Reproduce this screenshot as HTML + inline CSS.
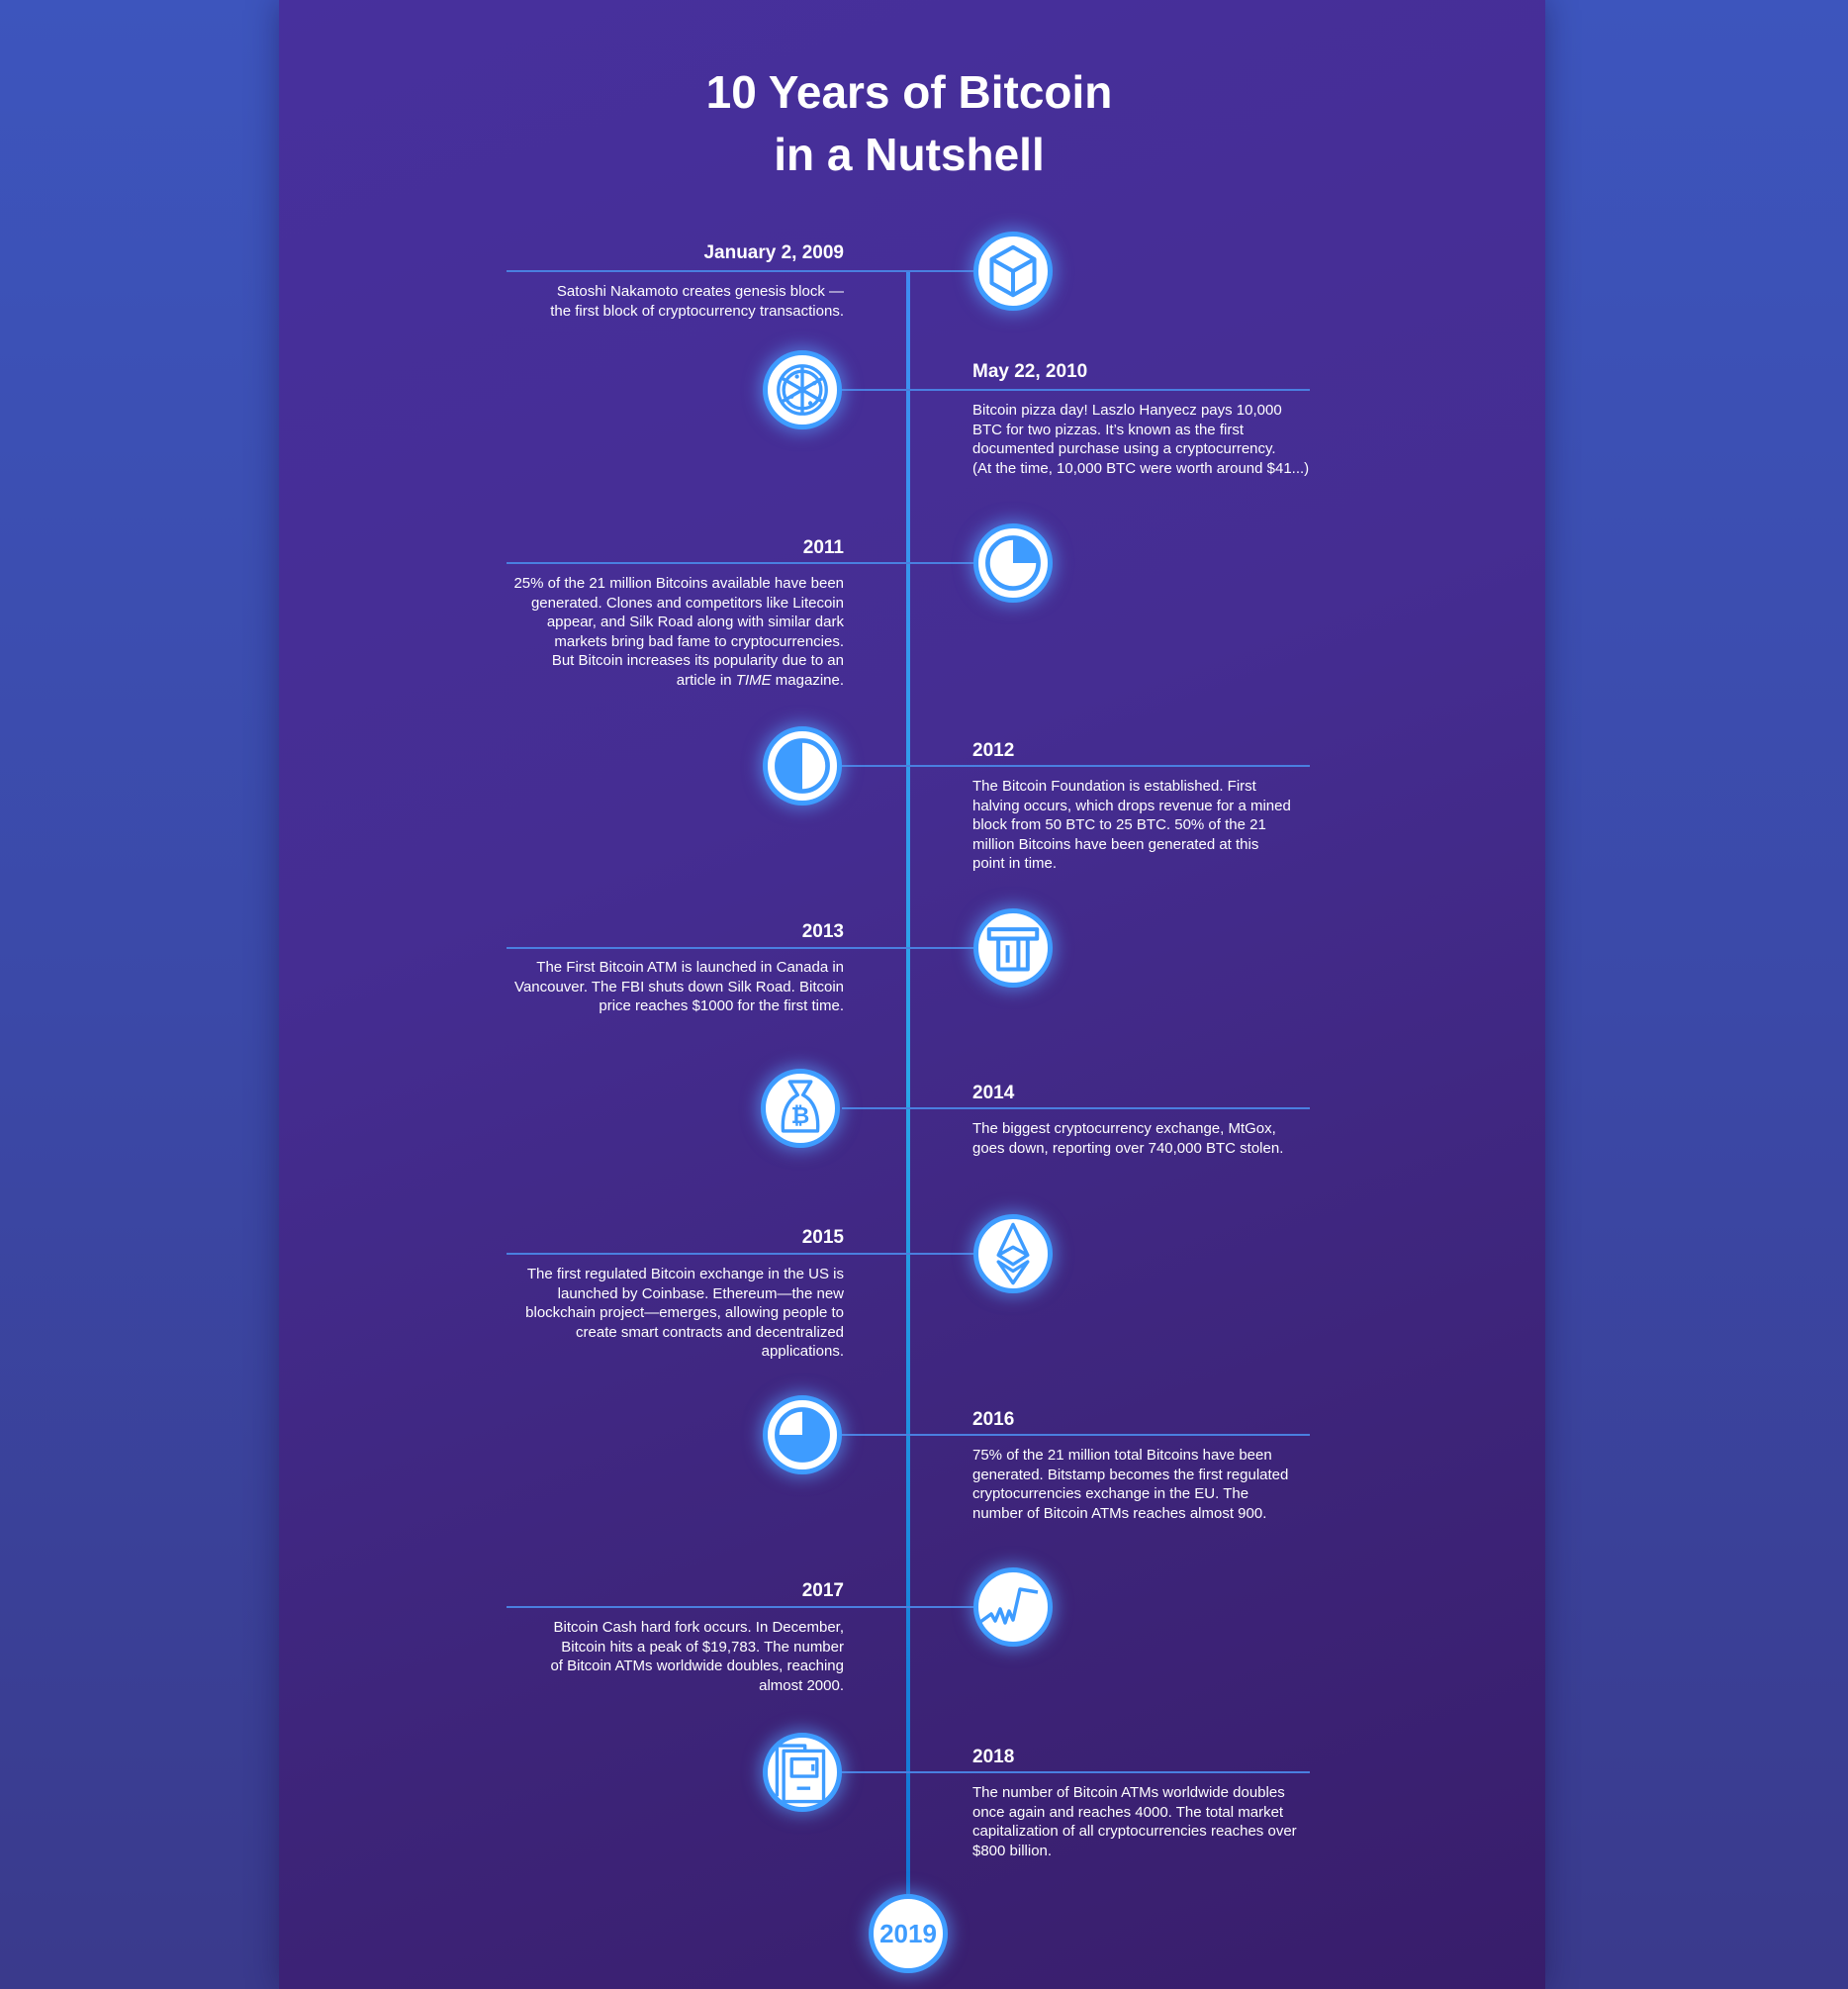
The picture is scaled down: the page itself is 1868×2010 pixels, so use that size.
<!DOCTYPE html>
<html><head><meta charset="utf-8"><style>
*{margin:0;padding:0;box-sizing:border-box}
body{width:1868px;height:2010px;position:relative;overflow:hidden;font-family:"Liberation Sans",sans-serif;background:linear-gradient(180deg,#3d55bd 0%,#3b49a8 50%,#3a3a8c 100%)}
#panel{position:absolute;left:282px;top:0;width:1280px;height:2010px;background:linear-gradient(160deg,#47309d 0%,#452d92 40%,#3d2479 75%,#381d6b 100%);box-shadow:0 0 30px rgba(20,10,60,.4)}
h1{position:absolute;left:0;width:1838px;top:62px;text-align:center;color:#fff;font-size:46px;line-height:63px;font-weight:bold}
.v{position:absolute;left:916px;top:274px;width:4px;height:1640px;background:linear-gradient(180deg,#3f8cf2,#2aa6e8 50%,#1274d6)}
.h{position:absolute;height:2px;background:#4a7fe0}
.c{position:absolute;width:80px;height:80px;border-radius:50%;background:#fff;border:5px solid #3e9cff;box-shadow:0 0 16px 4px rgba(90,160,255,.55)}
.c svg{position:absolute;left:0;top:0;width:70px;height:70px}
.t{position:absolute;color:#fff;font-size:19px;font-weight:bold;line-height:22px;width:341px}
.b{position:absolute;color:#fff;font-size:15px;line-height:19.6px;width:345px}
.L{text-align:right}
</style></head><body>
<div id="panel"></div>
<h1>10 Years of Bitcoin<br>in a Nutshell</h1>
<div class="v"></div>

<div class="h" style="left:512px;top:273px;width:472px"></div>
<div class="t L" style="left:512px;top:245px">January 2, 2009</div>
<div class="b L" style="left:508px;top:285px">Satoshi Nakamoto creates genesis block —<br>the first block of cryptocurrency transactions.</div>
<div class="c" style="left:984px;top:234px"><svg viewBox="9 9 52 52" fill="none" stroke="#3e9cff" stroke-width="3" stroke-linejoin="round"><path d="M35 17 51 26 51 44 35 53 19 44 19 26Z M19 26 35 35 51 26 M35 35 35 53"/></svg></div>

<div class="h" style="left:851px;top:393px;width:473px"></div>
<div class="t" style="left:983px;top:365px">May 22, 2010</div>
<div class="b" style="left:983px;top:405px">Bitcoin pizza day! Laszlo Hanyecz pays 10,000<br>BTC for two pizzas. It’s known as the first<br>documented purchase using a cryptocurrency.<br>(At the time, 10,000 BTC were worth around $41...)</div>
<div class="c" style="left:771px;top:354px"><svg viewBox="9 9 52 52" fill="none" stroke="#3e9cff" stroke-width="2.5"><circle cx="35" cy="35" r="18"/><circle cx="35" cy="35" r="14"/><path d="M35 17V53M19.4 26 50.6 44M19.4 44 50.6 26"/><g fill="#3e9cff" stroke="none"><circle cx="31" cy="25" r="1.6"/><circle cx="44" cy="30" r="1.6"/><circle cx="41" cy="45" r="1.6"/><circle cx="27" cy="40" r="1.6"/></g></svg></div>

<div class="h" style="left:512px;top:568px;width:472px"></div>
<div class="t L" style="left:512px;top:543px">2011</div>
<div class="b L" style="left:508px;top:580px">25% of the 21 million Bitcoins available have been<br>generated. Clones and competitors like Litecoin<br>appear, and Silk Road along with similar dark<br>markets bring bad fame to cryptocurrencies.<br>But Bitcoin increases its popularity due to an<br>article in <i>TIME</i> magazine.</div>
<div class="c" style="left:984px;top:529px"><svg viewBox="9 9 52 52" fill="none" stroke="#3e9cff" stroke-width="3.5"><circle cx="35" cy="35" r="19"/><path d="M35 35V16A19 19 0 0 1 54 35Z" fill="#3e9cff" stroke="none"/></svg></div>

<div class="h" style="left:851px;top:773px;width:473px"></div>
<div class="t" style="left:983px;top:748px">2012</div>
<div class="b" style="left:983px;top:785px">The Bitcoin Foundation is established. First<br>halving occurs, which drops revenue for a mined<br>block from 50 BTC to 25 BTC. 50% of the 21<br>million Bitcoins have been generated at this<br>point in time.</div>
<div class="c" style="left:771px;top:734px"><svg viewBox="9 9 52 52" fill="none" stroke="#3e9cff" stroke-width="3.5"><circle cx="35" cy="35" r="19"/><path d="M35 16A19 19 0 0 0 35 54Z" fill="#3e9cff" stroke="none"/></svg></div>

<div class="h" style="left:512px;top:957px;width:472px"></div>
<div class="t L" style="left:512px;top:931px">2013</div>
<div class="b L" style="left:508px;top:968px">The First Bitcoin ATM is launched in Canada in<br>Vancouver. The FBI shuts down Silk Road. Bitcoin<br>price reaches $1000 for the first time.</div>
<div class="c" style="left:984px;top:918px"><svg viewBox="9 9 52 52" fill="none" stroke="#3e9cff" stroke-width="3" stroke-linejoin="round"><path d="M17 21H53V28H17Z M24 28V51H46V28 M31 33V46 M39 28V51"/></svg></div>

<div class="h" style="left:851px;top:1119px;width:473px"></div>
<div class="t" style="left:983px;top:1094px">2014</div>
<div class="b" style="left:983px;top:1131px">The biggest cryptocurrency exchange, MtGox,<br>goes down, reporting over 740,000 BTC stolen.</div>
<div class="c" style="left:769px;top:1080px"><svg viewBox="9 9 52 52" fill="none" stroke="#3e9cff" stroke-width="2.5" stroke-linejoin="round"><path d="M27 15H43L37 25C45 29 49 39 48 52H22C21 39 25 29 33 25Z"/><text x="35" y="46" font-family="Liberation Sans" font-weight="bold" font-size="17" fill="#3e9cff" stroke="none" text-anchor="middle">₿</text></svg></div>

<div class="h" style="left:512px;top:1266px;width:472px"></div>
<div class="t L" style="left:512px;top:1240px">2015</div>
<div class="b L" style="left:508px;top:1278px">The first regulated Bitcoin exchange in the US is<br>launched by Coinbase. Ethereum—the new<br>blockchain project—emerges, allowing people to<br>create smart contracts and decentralized<br>applications.</div>
<div class="c" style="left:984px;top:1227px"><svg viewBox="9 9 52 52" fill="none" stroke="#3e9cff" stroke-width="2.5" stroke-linejoin="round"><path d="M35 13 24 36 35 43 46 36Z M24 41 35 48 46 41 35 57Z M24 36 35 30 46 36"/></svg></div>

<div class="h" style="left:851px;top:1449px;width:473px"></div>
<div class="t" style="left:983px;top:1424px">2016</div>
<div class="b" style="left:983px;top:1461px">75% of the 21 million total Bitcoins have been<br>generated. Bitstamp becomes the first regulated<br>cryptocurrencies exchange in the EU. The<br>number of Bitcoin ATMs reaches almost 900.</div>
<div class="c" style="left:771px;top:1410px"><svg viewBox="9 9 52 52" fill="none" stroke="#3e9cff" stroke-width="3.5"><circle cx="35" cy="35" r="19"/><path d="M35 35V16A19 19 0 1 1 16 35Z" fill="#3e9cff" stroke="none"/></svg></div>

<div class="h" style="left:512px;top:1623px;width:472px"></div>
<div class="t L" style="left:512px;top:1597px">2017</div>
<div class="b L" style="left:508px;top:1635px">Bitcoin Cash hard fork occurs. In December,<br>Bitcoin hits a peak of $19,783. The number<br>of Bitcoin ATMs worldwide doubles, reaching<br>almost 2000.</div>
<div class="c" style="left:984px;top:1584px"><svg viewBox="0 0 70 70" fill="none" stroke="#3e9cff" stroke-width="3.5" stroke-linejoin="round"><path d="M2 50 13 42 17 49 22 37 27 51 31 39 35 48 42 17 60 20"/></svg></div>

<div class="h" style="left:851px;top:1790px;width:473px"></div>
<div class="t" style="left:983px;top:1765px">2018</div>
<div class="b" style="left:983px;top:1802px">The number of Bitcoin ATMs worldwide doubles<br>once again and reaches 4000. The total market<br>capitalization of all cryptocurrencies reaches over<br>$800 billion.</div>
<div class="c" style="left:771px;top:1751px"><svg viewBox="9 9 52 52" fill="none" stroke="#3e9cff" stroke-width="2.5" stroke-linejoin="round"><path d="M16 53V15H37V19 M21 19H51V57H21Z M27 25H46V38H27Z M31 47H41 M43 29V34"/></svg></div>

<div class="c" style="left:878px;top:1914px;display:flex;align-items:center;justify-content:center;color:#3e9cff;font-weight:bold;font-size:26px">2019</div>
</body></html>
